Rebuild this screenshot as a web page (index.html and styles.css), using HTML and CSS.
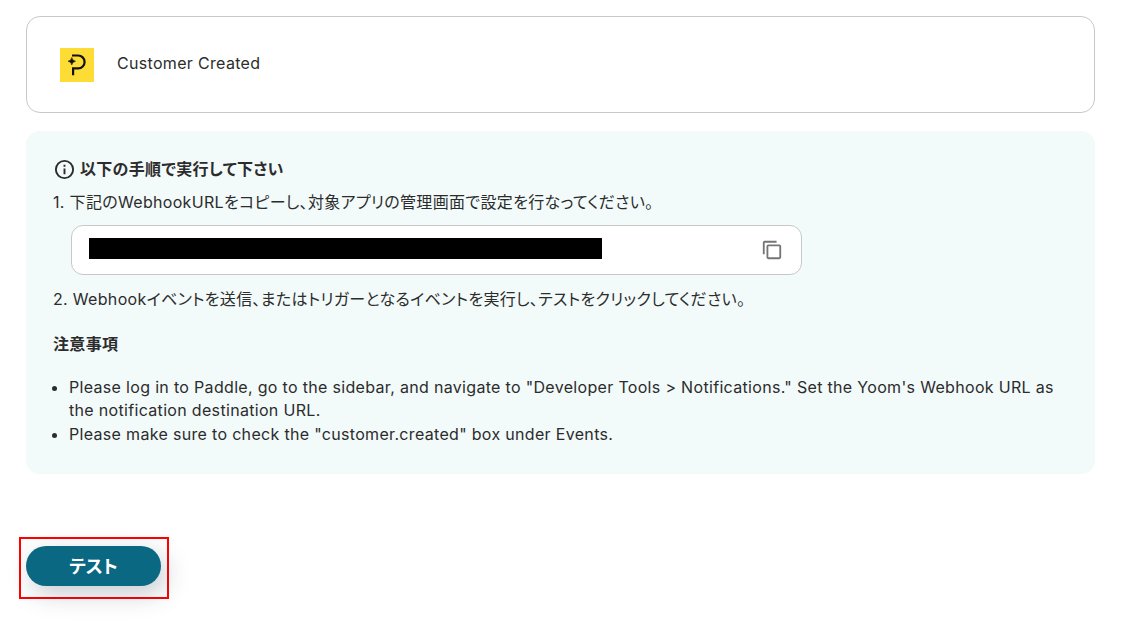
FILE: index.html
```html
<!DOCTYPE html>
<html lang="ja">
	<head>
		<meta charset="UTF-8">
		<title>Customer Created</title>
		<link rel="stylesheet" href="styles.css">
	</head>
	<body>
		<main class="page">
			<div class="app-card">
				<svg class="app-logo" viewBox="0 0 34 34" aria-hidden="true">
					<rect width="34" height="34" fill="#fddd35"/>
					<path d="M12 7.500H18.200A6.400 6.400 0 0 1 18.200 20.300H13.100V27.200" fill="none" stroke="#111" stroke-width="2.200"/>
					<path d="M11.800 9.500Q12.300 12.700 15.500 13.200Q12.300 13.700 11.800 16.900Q11.300 13.700 8.100 13.200Q11.300 12.700 11.800 9.500Z" fill="#111" stroke="#111" stroke-width="0.600"/>
				</svg>
				<span class="app-name">Customer Created</span>
			</div>
			<section class="guide">
				<h2 class="guide-title">
					<svg class="info-icon" viewBox="0 0 24 24" aria-hidden="true"><circle cx="12" cy="12" r="9" fill="none" stroke="currentColor" stroke-width="2"/><path d="M11 7h2v2h-2zm0 4h2v6h-2z" fill="currentColor"/></svg>
					以下の手順で実行して下さい
				</h2>
				<p class="step">1. 下記のWebhookURLをコピーし、対象アプリの管理画面で設定を行なってください。</p>
				<div class="url-box">
					<span class="url-mask"></span>
					<button class="copy-btn" type="button" aria-label="コピー">
						<svg viewBox="0 0 24 24" aria-hidden="true"><path d="M3 16.500V4a1 1 0 0 1 1-1H17M8 7H20a1 1 0 0 1 1 1V20a1 1 0 0 1-1 1H8a1 1 0 0 1-1-1V8a1 1 0 0 1 1-1Z" fill="none" stroke="currentColor" stroke-width="2"/></svg>
					</button>
				</div>
				<p class="step">2. Webhookイベントを送信、またはトリガーとなるイベントを実行し、テストをクリックしてください。</p>
				<h3 class="note-title">注意事項</h3>
				<ul class="notes">
					<li>Please log in to Paddle, go to the sidebar, and navigate to "Developer Tools &gt; Notifications." Set the Yoom's Webhook URL as the notification destination URL.</li>
					<li>Please make sure to check the "customer.created" box under Events.</li>
				</ul>
			</section>
			<div class="test-frame">
				<button class="test-btn" type="button">テスト</button>
			</div>
		</main>
	</body>
</html>
```

FILE: styles.css
```css
*{
	box-sizing: border-box;
	margin: 0;
	padding: 0;
}
body{
	background: #fff;
	color: #2c2c2c;
	font-family: Inter, "Noto Sans CJK JP", sans-serif;
	font-size: 16px;
	line-height: 24px;
	letter-spacing: 0.02em;
	font-feature-settings: "palt";
}
.page{
	padding: 16px 45px 32px 26px;
}
.app-card{
	display: flex;
	align-items: center;
	gap: 23px;
	padding: 31px 33px 30px;
	border: 1px solid #c8c8c8;
	border-radius: 14px;
	margin-bottom: 18px;
}
.app-logo{
	width: 34px;
	height: 34px;
}
.app-name{
	padding-bottom: 4px;
}
.guide{
	padding: 26px 27px 28px;
	background: #f2fafa;
	border-radius: 14px;
}
.guide-title{
	display: flex;
	align-items: center;
	gap: 4px;
	font-size: 16px;
	margin-bottom: 9px;
}
.info-icon{
	width: 23px;
	height: 23px;
}
.url-box{
	display: flex;
	align-items: flex-start;
	justify-content: space-between;
	width: 72%;
	height: 50px;
	margin: 11px 0 12px 18px;
	padding: 12px 17px;
	background: #fff;
	border: 1px solid #c8c8c8;
	border-radius: 12px;
}
.url-mask{
	width: 513px;
	height: 21px;
	background: #000;
}
.copy-btn{
	width: 24px;
	height: 24px;
	border: none;
	background: none;
	color: #757575;
	cursor: pointer;
}
.copy-btn svg{
	display: block;
	width: 22px;
	height: 22px;
	margin: 0 auto;
}
.note-title{
	margin: 21px 0 20px;
	font-size: 16px;
}
.notes{
	padding-left: 16px;
	line-height: 23px;
}
.notes li + li{
	margin-top: 1px;
}
.test-frame{
	width: 150px;
	margin: 63px 0 0 -7px;
	padding: 7px 5px 11px;
	border: 2px solid #f00;
}
.test-btn{
	display: block;
	width: 135px;
	height: 40px;
	padding-bottom: 3px;
	border: none;
	border-radius: 20px;
	background: #0b6882;
	box-shadow: 5px 8px 24px rgba(30,50,70,0.25);
	color: #fff;
	font-family: inherit;
	font-size: 18px;
	font-weight: bold;
	font-feature-settings: "palt";
	cursor: pointer;
}
```
